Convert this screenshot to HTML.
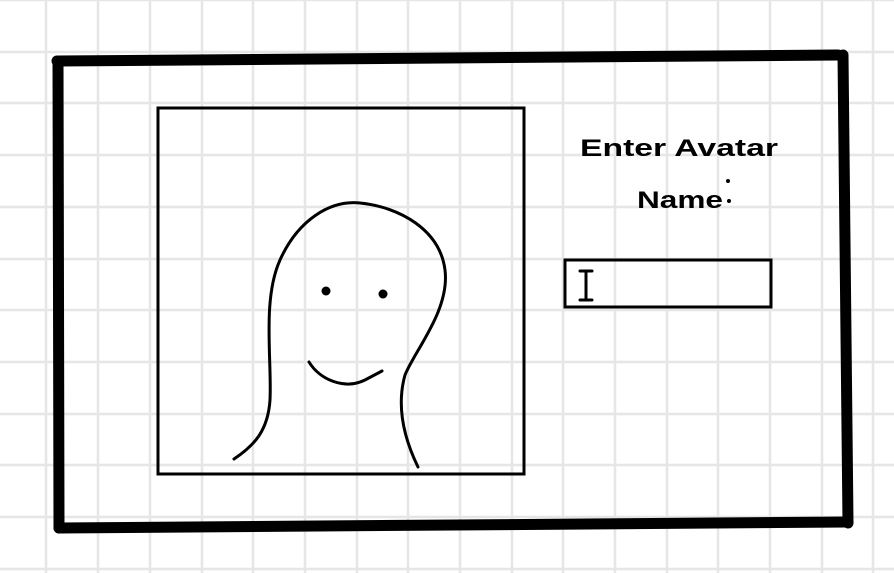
<!DOCTYPE html>
<html><head><style>html,body{margin:0;padding:0;background:#fff;}svg{display:block}</style></head>
<body>
<svg width="894" height="573" viewBox="0 0 894 573" xmlns="http://www.w3.org/2000/svg">
<g stroke="#e6e6e6" stroke-width="2.5">
<line x1="46" y1="0" x2="46" y2="573"/><line x1="98" y1="0" x2="98" y2="573"/><line x1="150" y1="0" x2="150" y2="573"/><line x1="202" y1="0" x2="202" y2="573"/><line x1="253" y1="0" x2="253" y2="573"/><line x1="305" y1="0" x2="305" y2="573"/><line x1="357" y1="0" x2="357" y2="573"/><line x1="408" y1="0" x2="408" y2="573"/><line x1="460" y1="0" x2="460" y2="573"/><line x1="512" y1="0" x2="512" y2="573"/><line x1="563" y1="0" x2="563" y2="573"/><line x1="615" y1="0" x2="615" y2="573"/><line x1="667" y1="0" x2="667" y2="573"/><line x1="718" y1="0" x2="718" y2="573"/><line x1="770" y1="0" x2="770" y2="573"/><line x1="822" y1="0" x2="822" y2="573"/><line x1="873" y1="0" x2="873" y2="573"/>
<line x1="0" y1="0" x2="894" y2="0"/><line x1="0" y1="52" x2="894" y2="52"/><line x1="0" y1="103" x2="894" y2="103"/><line x1="0" y1="155" x2="894" y2="155"/><line x1="0" y1="207" x2="894" y2="207"/><line x1="0" y1="259" x2="894" y2="259"/><line x1="0" y1="310" x2="894" y2="310"/><line x1="0" y1="362" x2="894" y2="362"/><line x1="0" y1="414" x2="894" y2="414"/><line x1="0" y1="465" x2="894" y2="465"/><line x1="0" y1="517" x2="894" y2="517"/><line x1="0" y1="569" x2="894" y2="569"/>
</g>
<g stroke="#000" stroke-width="11" stroke-linecap="round" fill="none">
<path d="M57 61 L838 55"/>
<path d="M58 61 L59 528"/>
<path d="M843 55 L848 523"/>
<path d="M59 528 L848 522"/>
</g>
<rect x="158" y="108" width="366" height="366" fill="none" stroke="#000" stroke-width="3"/>
<rect x="565" y="260" width="206" height="47" fill="none" stroke="#000" stroke-width="3"/>
<g stroke="#000" stroke-width="3" fill="none" stroke-linecap="round">
<path d="M580 271 L592 271 M586 271 L586 300 M580 300 L592 300"/>
<path d="M234 459 C255 445 268 430 270 400 C272 360 262 300 280 260 C298 220 330 200 360 203 C400 207 440 230 445 270 C450 310 415 350 405 375 C398 400 400 430 418 467"/>
<path d="M309 362 C320 380 345 390 365 380 L382 371"/>
</g>
<circle cx="326" cy="291" r="4.5" fill="#000"/>
<circle cx="383" cy="294" r="4.5" fill="#000"/>
<text x="580" y="156" textLength="198" lengthAdjust="spacingAndGlyphs" font-family="'Liberation Sans',sans-serif" font-size="24" font-weight="bold">Enter Avatar</text>
<text x="637" y="208" textLength="86" lengthAdjust="spacingAndGlyphs" font-family="'Liberation Sans',sans-serif" font-size="24" font-weight="bold">Name</text>
<circle cx="728" cy="181" r="2" fill="#000"/>
<circle cx="729" cy="201" r="2" fill="#000"/>
</svg>
</body></html>
